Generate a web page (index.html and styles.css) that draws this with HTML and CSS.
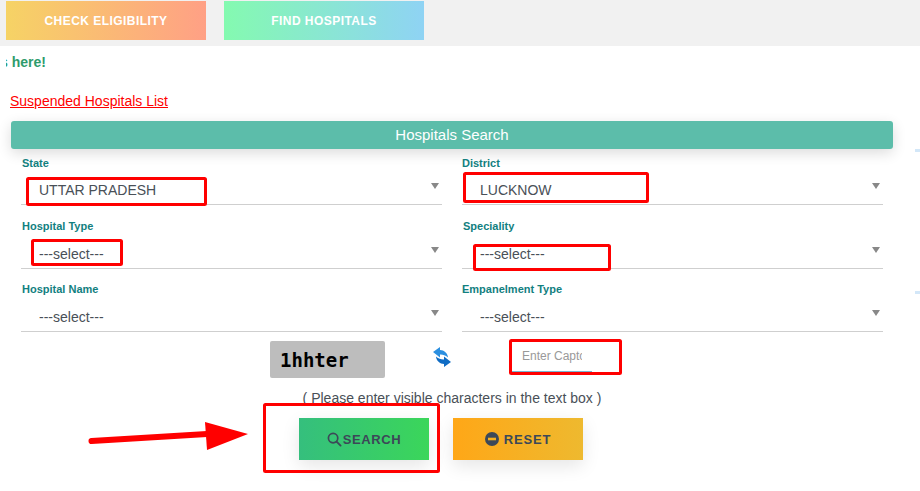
FILE: index.html
```html
<!DOCTYPE html>
<html lang="en">
<head>
<meta charset="utf-8">
<title>Hospitals Search</title>
<link rel="stylesheet" href="styles.css">
</head>
<body>
<div class="page">
  <header class="topbar">
    <a class="top-btn top-btn-check">CHECK ELIGIBILITY</a>
    <a class="top-btn top-btn-find">FIND HOSPITALS</a>
  </header>
  <div class="ticker"><span class="ticker-text">s here!</span></div>
  <a class="suspended">Suspended Hospitals List</a>
  <section class="panel">
    <h1 class="panel-title">Hospitals Search</h1>
    <form class="form">
      <div class="fields">
        <div class="field field-first"><label class="label">State</label><div class="select-wrap"><select class="select"><option>UTTAR PRADESH</option></select></div></div>
        <div class="field field-first"><label class="label">District</label><div class="select-wrap"><select class="select"><option>LUCKNOW</option></select></div></div>
        <div class="field"><label class="label">Hospital Type</label><div class="select-wrap"><select class="select"><option>---select---</option></select></div></div>
        <div class="field"><label class="label label-nudge">Speciality</label><div class="select-wrap"><select class="select"><option>---select---</option></select></div></div>
        <div class="field"><label class="label">Hospital Name</label><div class="select-wrap"><select class="select"><option>---select---</option></select></div></div>
        <div class="field"><label class="label">Empanelment Type</label><div class="select-wrap"><select class="select"><option>---select---</option></select></div></div>
      </div>
      <div class="captcha-row">
        <div class="captcha-image">1hhter</div>
        <svg class="refresh" viewBox="0 0 18 20" aria-hidden="true">
          <path fill="#2b8fe0" d="M7 0 L0 5 L7 10.5 L7 7.6 C9.5 7.4 12 8 15 10.5 C14.8 6 11 3.2 7 3 Z"/>
          <path fill="#0f6cc4" d="M11 20 L18 15 L11 9.5 L11 12.4 C8.5 12.6 6 12 3 9.5 C3.2 14 7 16.8 11 17 Z"/>
        </svg>
        <input class="captcha-input" type="text" placeholder="Enter Captcha">
      </div>
      <p class="hint">( Please enter visible characters in the text box )</p>
      <div class="actions">
        <button class="action action-search" type="button">
          <svg class="action-icon" viewBox="0 0 16 16" aria-hidden="true"><circle cx="6.5" cy="6.5" r="5" fill="none" stroke="#3c4858" stroke-width="1.8"/><path d="M10.2 10.2 L14.5 14.5" stroke="#3c4858" stroke-width="2" stroke-linecap="round"/></svg>SEARCH
        </button>
        <button class="action action-reset" type="button">
          <svg class="action-icon action-icon-reset" viewBox="0 0 14 14" aria-hidden="true"><circle cx="7" cy="7" r="7" fill="#3c4858"/><rect x="3" y="5.7" width="8" height="2.6" fill="#f5b020"/></svg>RESET
        </button>
      </div>
    </form>
  </section>
  <span class="edge-mark edge-mark-a"></span>
  <span class="edge-mark edge-mark-b"></span>
  <svg class="annotations" viewBox="0 0 920 491" aria-hidden="true">
    <g fill="none" stroke="#ff0000" stroke-width="3" stroke-linejoin="round">
      <rect x="27.5" y="178.5" width="178" height="26" rx="1"/>
      <rect x="32.5" y="240.5" width="89" height="24" rx="1"/>
      <rect x="464.5" y="173.5" width="183" height="28" rx="1"/>
      <rect x="474.5" y="245.5" width="135" height="24" rx="1"/>
      <rect x="510.5" y="340.5" width="110" height="33" rx="1"/>
      <rect x="264.5" y="404.5" width="174" height="67" rx="1"/>
    </g>
    <path d="M91.5 441 L207 434" stroke="#ff0000" stroke-width="6" stroke-linecap="round"/>
    <path d="M205 422 L248 434 L207 450 Z" fill="#ff0000"/>
  </svg>
</div>
</body>
</html>
```
FILE: styles.css
```css
* { box-sizing: border-box; }
html, body { margin: 0; padding: 0; }
body {
  background: #fff;
  font-family: "Liberation Sans", Arial, sans-serif;
  color: #495057;
  overflow: hidden;
}
.page {
  position: relative;
  width: 920px;
  height: 491px;
  overflow: hidden;
}
.topbar {
  display: flex;
  gap: 18px;
  height: 46px;
  padding: 1px 0 0 6px;
  background: #f1f1f1;
}
.top-btn {
  display: flex;
  align-items: center;
  justify-content: center;
  width: 200px;
  height: 39px;
  color: #fff;
  font-size: 12px;
  font-weight: 700;
  letter-spacing: 0.45px;
}
.top-btn-check { background: linear-gradient(90deg, #f6d365, #ffa085); }
.top-btn-find { background: linear-gradient(90deg, #84fab0, #8fd3f4); }
.ticker {
  height: 32px;
  margin-left: 6px;
  overflow: hidden;
}
.ticker-text {
  display: block;
  margin-left: -6px;
  padding-top: 8px;
  line-height: 16px;
  font-size: 14px;
  font-weight: 700;
  color: #2e9b6c;
  white-space: nowrap;
}
.suspended {
  display: block;
  height: 43px;
  margin-left: 10px;
  padding-top: 15px;
  font-size: 14px;
  line-height: 16px;
  color: #ff0000;
  text-decoration: underline;
}
.panel { margin-left: 11px; width: 882px; }
.panel-title {
  margin: 0;
  height: 28px;
  line-height: 28px;
  text-align: center;
  font-size: 15px;
  font-weight: 400;
  color: #fff;
  background: #5cbdaa;
  border-radius: 3px;
  box-shadow: 0 4px 14px rgba(0, 0, 0, 0.14);
}
.form { margin: 7px 0 0 10px; width: 862px; }
.fields {
  display: grid;
  grid-template-columns: 421px 421px;
  column-gap: 20px;
  row-gap: 13px;
}
.field-first { margin-bottom: 1px; }
.label {
  display: block;
  height: 14px;
  line-height: 14px;
  font-size: 11px;
  font-weight: 700;
  color: #12807f;
  padding-left: 1px;
}
.field:nth-child(even) .label { padding-left: 0; }
.field:nth-child(even) .label-nudge { padding-left: 1px; }
.select-wrap {
  position: relative;
  height: 36px;
  border-bottom: 1px solid #cfcfcf;
}
.field-first .select-wrap { height: 35px; }
.select-wrap::after {
  content: "";
  position: absolute;
  right: 3px;
  top: 14px;
  border-left: 4.5px solid transparent;
  border-right: 4.5px solid transparent;
  border-top: 6px solid #888;
}
.field-first .select-wrap::after { top: 13px; }
.select {
  display: block;
  width: 100%;
  height: 100%;
  padding: 7px 0 0 18px;
  border: 0;
  background: transparent;
  appearance: none;
  font: 14px "Liberation Sans", Arial, sans-serif;
  color: #495057;
  outline: none;
}
.field-first .select { padding-top: 5px; }
.captcha-row {
  display: flex;
  align-items: flex-start;
  margin-top: 9px;
  padding-left: 249px;
}
.captcha-image {
  width: 115px;
  height: 37px;
  padding-left: 10px;
  line-height: 38px;
  background: #bdbdbd;
  border-radius: 2px;
  font-family: "DejaVu Sans Mono", monospace;
  font-weight: 700;
  font-size: 19px;
  color: #000;
}
.refresh {
  width: 18px;
  height: 20px;
  margin: 6px 0 0 48px;
}
.captcha-input {
  width: 80px;
  height: 31px;
  margin-left: 61px;
  padding: 0 10px;
  border: 0;
  border-bottom: 1px solid #7ab5d0;
  background: transparent;
  font: 12px "Liberation Sans", Arial, sans-serif;
  outline: none;
}
.captcha-input::placeholder { color: #999; opacity: 1; }
.hint {
  margin: 12px 0 0;
  height: 16px;
  line-height: 16px;
  text-align: center;
  font-size: 14px;
  color: #495057;
}
.actions {
  display: flex;
  gap: 24px;
  margin-top: 12px;
  padding-left: 278px;
}
.action {
  display: flex;
  align-items: center;
  justify-content: center;
  width: 130px;
  height: 42px;
  padding: 0;
  border: 0;
  font: 700 13px "Liberation Sans", Arial, sans-serif;
  letter-spacing: 0.8px;
  color: #3c4858;
  box-shadow: 0 6px 18px rgba(0, 0, 0, 0.1);
}
.action-search { background: linear-gradient(90deg, #35bf7d, #3bd65a); letter-spacing: 0.6px; }
.action-reset { background: linear-gradient(90deg, #ffa717, #eeb92f); }
.action-icon { width: 15px; height: 15px; margin-right: 1px; }
.action-icon-reset { width: 14px; height: 14px; margin-right: 5px; }
.edge-mark {
  position: absolute;
  right: 0;
  width: 5px;
  height: 3px;
  background: #d3e7f8;
}
.edge-mark-a { top: 149px; }
.edge-mark-b { top: 291px; }
.annotations {
  position: absolute;
  left: 0;
  top: 0;
  width: 920px;
  height: 491px;
  pointer-events: none;
}
```
